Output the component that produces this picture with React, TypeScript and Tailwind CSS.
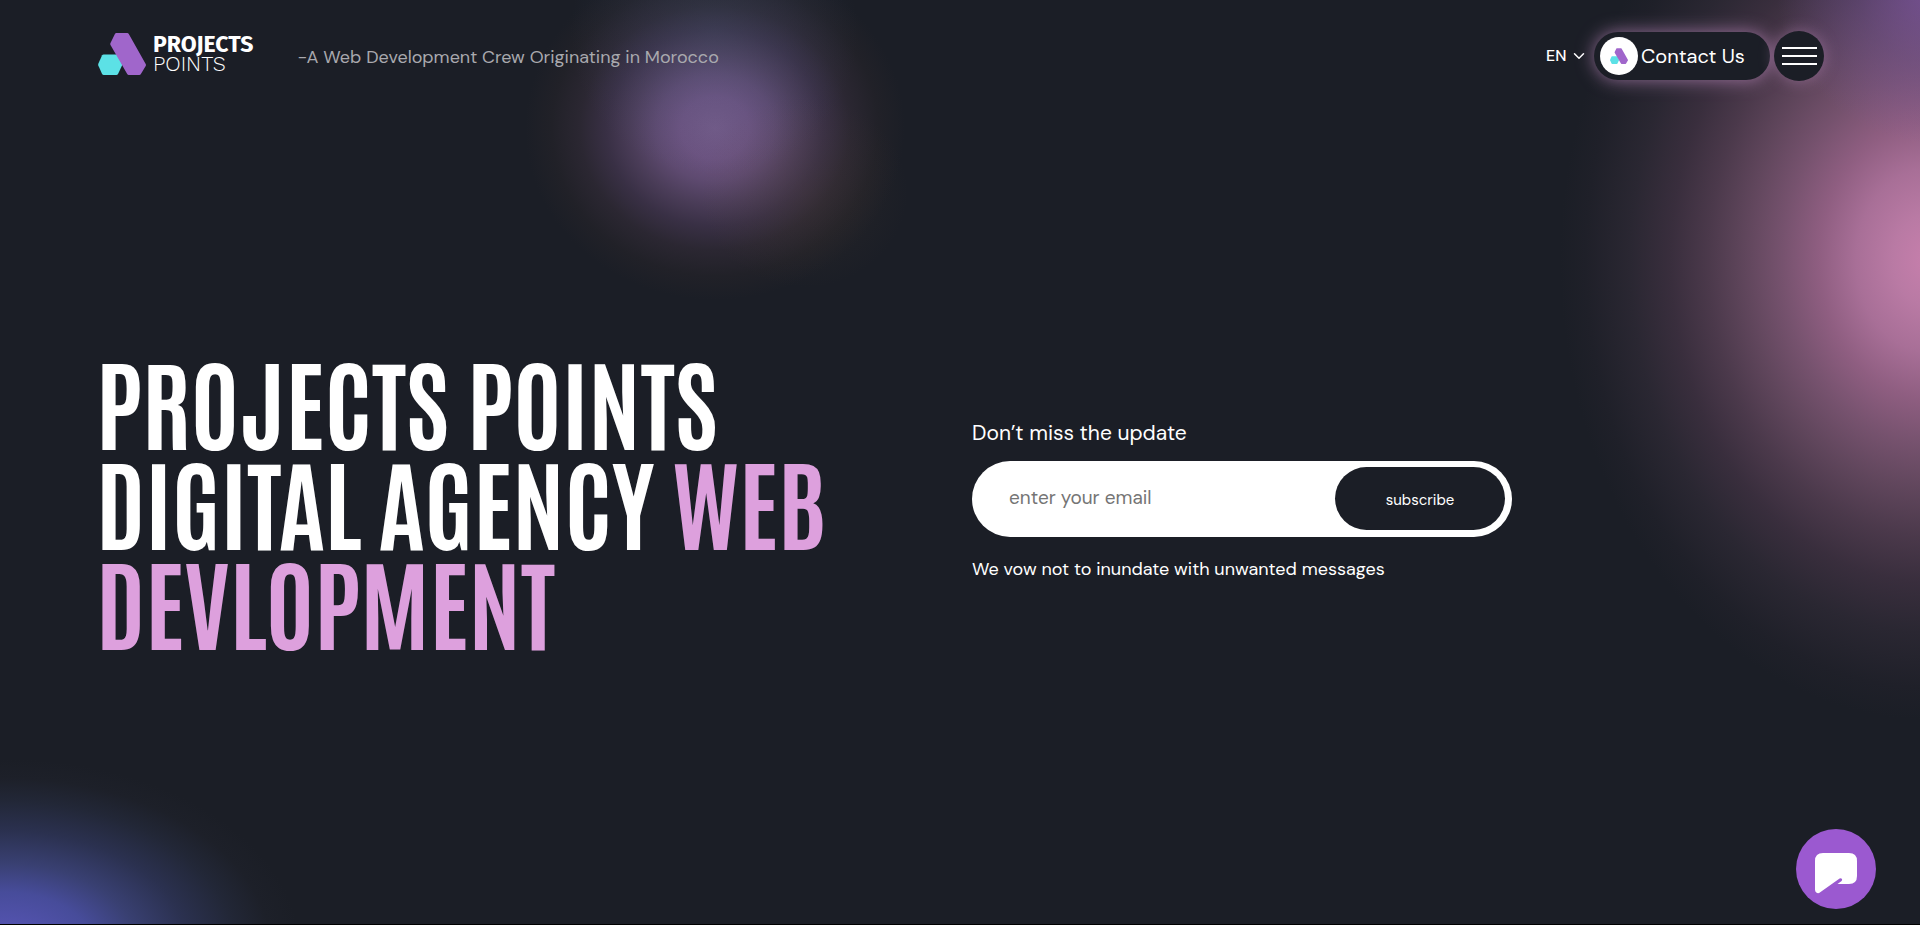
import { ChevronDown } from "lucide-react";

function LogoMark({ className }: { className: string }) {
  return (
    <svg viewBox="0 0 48 42" className={className} aria-hidden="true">
      <path
        d="M5.6 21.4H18.4Q19.4 21.4 20 22.3L24 30.8Q24.4 31.7 24 32.6L20 41.1Q19.4 42 18.4 42H5.6Q4.6 42 4.1 41.1L0.3 32.6Q0 31.7 0.3 30.8L4.1 22.3Q4.6 21.4 5.6 21.4Z"
        fill="#5ce1e6"
      />
      <path
        d="M18.4 0H29.2Q30.2 0 30.8 1L47.7 31Q48.2 32 47.7 33L42.9 41.1Q42.3 42 41.3 42H30.8Q29.8 42 29.2 41L12.5 12Q12 11 12.5 10L16.9 1Q17.4 0 18.4 0Z"
        fill="#a066cb"
      />
    </svg>
  );
}

function Glows() {
  return (
    <div className="pointer-events-none absolute inset-0 -z-10" aria-hidden="true">
      <div className="absolute -top-11 left-[525px] h-[344px] w-[380px] bg-[radial-gradient(closest-side,#735a87_0%,#6c5380_18%,#5e4a70_31%,#4b3d59_44%,#393045_57%,#2b2732_71%,#212128_86%,#1b1e2600_100%)]" />
      <div className="absolute -top-28 left-[570px] h-72 w-72 bg-[radial-gradient(closest-side,#4b6a8c33_0%,#4b5f8c1f_50%,#4b5f8c00_100%)]" />
      <div className="absolute top-24 left-[700px] h-48 w-52 bg-[radial-gradient(closest-side,#6a503a26_0%,#6a503a14_50%,#6a503a00_100%)]" />
      <div className="absolute -top-[200px] -right-[380px] h-[920px] w-[740px] bg-[radial-gradient(closest-side,#c77fac_0%,#b97aa4_10%,#a86f97_20%,#8f5e81_30%,#76526e_40%,#60465c_50%,#4b394b_60%,#392e3d_70%,#2a2732_81%,#1f2029_93%,#1b1e2600_100%)]" />
      <div className="absolute -top-44 -right-44 h-80 w-80 bg-[radial-gradient(closest-side,#8a5cb8a6_0%,#7c58b04d_50%,#7c58b000_100%)]" />
      <div className="absolute -bottom-[215px] -left-[290px] h-[380px] w-[590px] bg-[radial-gradient(closest-side,#5858b8_0%,#5252ac_14%,#474c9a_30%,#394072_45%,#2b3150_62%,#222737_78%,#1d2029_90%,#1b1e2600_100%)]" />
    </div>
  );
}

function Header() {
  return (
    <header className="flex items-center justify-between pt-[31px] pr-24 pl-[98px]">
      <div className="flex items-center gap-11">
        <a href="#home" className="flex items-center gap-[7px] pb-1">
          <LogoMark className="h-[42px] w-12" />
          <span className="flex flex-col leading-[20px]">
            <span className="font-['Fira_Sans','Noto_Sans',sans-serif] text-[23px] font-bold">PROJECTS</span>
            <span className="font-['Work_Sans','Noto_Sans',sans-serif] text-[21px] font-light">POINTS</span>
          </span>
        </a>
        <p className="pt-px text-lg text-[#a9a9ae]">-A Web Development Crew Originating in Morocco</p>
      </div>
      <div className="flex items-center gap-1">
        <label className="mr-[2px] flex items-center text-base font-medium">
          <select aria-label="Language" className="w-6 appearance-none bg-transparent outline-none">
            <option>EN</option>
          </select>
          <ChevronDown className="size-[18px]" strokeWidth={2} />
        </label>
        <a
          href="#contact"
          className="flex h-12 w-44 items-center gap-[3px] rounded-full bg-[#1b1e26] pl-[6px] text-xl shadow-[0_0_18px_#dda0dd99]"
        >
          <span className="flex size-[38px] shrink-0 items-center justify-center rounded-full bg-white">
            <LogoMark className="h-4 w-[18px]" />
          </span>
          <span className="whitespace-nowrap">Contact Us</span>
        </a>
        <button
          type="button"
          aria-label="Open menu"
          className="flex size-[50px] flex-col items-center justify-center gap-[6px] rounded-full bg-[#1b1e26] shadow-[0_0_16px_#dda0dd66]"
        >
          <span className="h-[2px] w-[35px] bg-white" />
          <span className="h-[2px] w-[35px] bg-white" />
          <span className="h-[2px] w-[35px] bg-white" />
        </button>
      </div>
    </header>
  );
}

function Newsletter() {
  return (
    <form className="flex max-w-[540px] flex-col" onSubmit={(event) => event.preventDefault()}>
      <label htmlFor="email" className="text-[21px] leading-8">
        Don’t miss the update
      </label>
      <div className="mt-3 flex h-[76px] items-center rounded-full bg-white p-[7px]">
        <input
          id="email"
          type="email"
          placeholder="enter your email"
          className="min-w-0 flex-1 bg-transparent pl-[30px] text-[19px] text-[#1b1e26] outline-none placeholder:text-[#757575]"
        />
        <button type="submit" className="h-[63px] w-[170px] rounded-full bg-[#1b1e26] pt-[3px] text-[15px]">
          subscribe
        </button>
      </div>
      <p className="mt-[18px] text-lg leading-7">We vow not to inundate with unwanted messages</p>
    </form>
  );
}

export default function App() {
  return (
    <div className="relative isolate flex min-h-screen flex-col overflow-hidden border-b border-black bg-[#1b1e26] font-['Satoshi','DM_Sans',Inter,sans-serif] text-white">
      <Glows />
      <Header />
      <main className="grid flex-1 grid-cols-2 items-center gap-6 px-24 pb-[6px]">
        <h1 className="flex flex-col font-['Antonio','Roboto_Condensed',Roboto,sans-serif] text-[100px] leading-[100px] font-bold">
          <span>PROJECTS POINTS</span>
          <span>
            DIGITAL AGENCY <span className="text-[#dda0dd]">WEB</span>
          </span>
          <span className="text-[#dda0dd]">DEVLOPMENT</span>
        </h1>
        <Newsletter />
      </main>
      <button
        type="button"
        aria-label="Open chat"
        className="fixed right-11 bottom-4 flex size-20 items-center justify-center rounded-full bg-[#9b59d0] pt-2"
      >
        <svg viewBox="0 0 42 41" className="h-[41px] w-[42px]" aria-hidden="true">
          <path
            d="M8 0H34Q42 0 42 8V23Q42 31 34 31H22.5L26.6 28Q27.6 26.8 26.8 25.8Q25.8 25 24.6 25.6L5.2 39.3Q3.4 40.7 1.6 39.8Q0 38.8 0 36.8V8Q0 0 8 0Z"
            fill="#fff"
          />
        </svg>
      </button>
    </div>
  );
}
